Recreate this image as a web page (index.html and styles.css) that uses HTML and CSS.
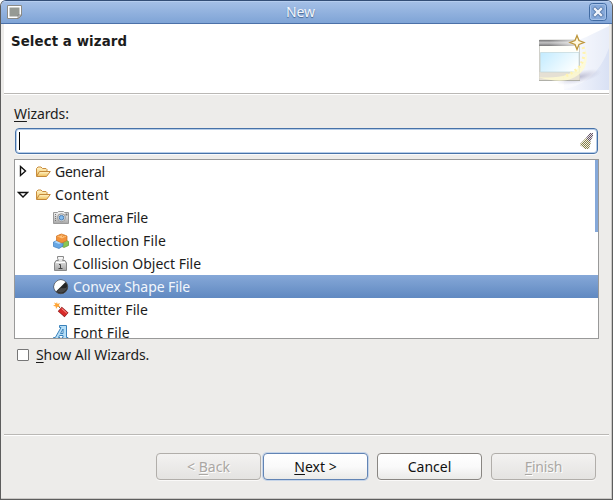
FILE: index.html
```html
<!DOCTYPE html>
<html lang="en">
<head>
<meta charset="utf-8">
<title>New</title>
<link rel="stylesheet" href="styles.css">
</head>
<body>
<svg width="0" height="0" class="defs">
  <defs>
    <linearGradient id="gold" x1="0" y1="0" x2="0" y2="1"><stop offset="0" stop-color="#fff6cd"/><stop offset="1" stop-color="#efbd55"/></linearGradient>
    <linearGradient id="metal" x1="0" y1="0" x2="0" y2="1"><stop offset="0" stop-color="#f8f8f8"/><stop offset="1" stop-color="#a8a8a8"/></linearGradient>
    <symbol id="folder" viewBox="0 0 16 16">
      <path d="M1.500 12V4.500L3 3h3l1.500 1.500H11l1 1V8" fill="url(#gold)" stroke="#c98d3d"/>
      <path d="M1.500 12.500L4.500 7.500H15.300L11.500 12.500Z" fill="url(#gold)" stroke="#c4883a"/>
    </symbol>
  </defs>
</svg>
<div class="window">
  <header class="titlebar">
    <svg class="app" width="16" height="16" viewBox="0 0 16 16"><path d="M.5 1.500h14v10l-3 3H.5z" fill="#fff" stroke="#8b8b87"/><path d="M2.500 3.500h10v7l-2 2h-8z" fill="#969a94"/><path d="M11 14.500v-3.500h3.500z" fill="#ccc" stroke="#777" stroke-width=".7"/></svg>
    <span class="title">New</span>
    <svg class="close" width="18" height="18" viewBox="0 0 18 18"><rect x=".5" y=".5" width="17" height="17" rx="3" fill="#86a9da" stroke="#416ba3"/><rect x="1.500" y="1.500" width="15" height="15" rx="2" fill="none" stroke="#a6c2e8"/><path d="M6 6l6 6M12 6l-6 6" stroke="#5578a8" stroke-width="4" stroke-linecap="square"/><path d="M6 6l6 6M12 6l-6 6" stroke="#f0f4fb" stroke-width="2.400" stroke-linecap="square"/></svg>
  </header>
  <section class="banner">
    <h1>Select a wizard</h1>
    <svg class="art" width="75" height="66" viewBox="0 0 75 66">
      <defs>
        <linearGradient id="bg"><stop offset="0" stop-color="#fafbff"/><stop offset="1" stop-color="#d9e1f4"/></linearGradient>
        <linearGradient id="bar" x1="0" y1="0" x2="0" y2="1"><stop offset="0" stop-color="#777"/><stop offset=".45" stop-color="#c2c2c2"/><stop offset="1" stop-color="#777"/></linearGradient>
        <linearGradient id="fade"><stop offset=".25" stop-color="#fff" stop-opacity="0"/><stop offset="1" stop-color="#fff" stop-opacity=".8"/></linearGradient>
        <linearGradient id="sky" x2="1" y2=".5"><stop offset="0" stop-color="#c2ebff"/><stop offset="1" stop-color="#fafeff"/></linearGradient>
        <radialGradient id="shade"><stop offset="0" stop-color="#9d9dba" stop-opacity=".65"/><stop offset="1" stop-color="#b3b3ce" stop-opacity="0"/></radialGradient>
      </defs>
      <path d="M28 23Q52 14 75 2v64H30z" fill="url(#bg)"/>
      <path d="M75 0Q52 11 28 17l-2 49Q62 61 75 24z" fill="#fff" opacity=".4"/>
      <ellipse cx="45" cy="53" rx="23" ry="6" fill="url(#shade)" transform="rotate(-14 45 53)"/>
      <path d="M5.500 16h40v40h-40z" fill="#fffffa" stroke="#bcbcb4" stroke-width=".7"/>
      <path d="M5.500 48h40v8h-40z" fill="#e5e0d4"/>
      <path d="M5 16h40v6H5z" fill="url(#bar)"/><path d="M5 16h41v6H5z" fill="url(#fade)"/>
      <path d="M6.500 28.500H45V48H6.500z" fill="url(#sky)" stroke="#b9d0d5" stroke-width=".6"/>
      <path d="M5 56.500h41" stroke="#b0b0a8"/>
      <path d="M48 19Q56 31 46 42Q34 56 4 53Q39 64 51 43Q56 29 48 19z" fill="#fffbd0" opacity=".8"/>
      <path d="M49 23Q52 32 46 42Q40 49 29 53" fill="none" stroke="#fff3b0" stroke-width="3" stroke-dasharray="2 3"/>
      <path d="M43 11.500l2 5 5 2-5 2-2 5-2-5-5-2 5-2z" fill="#fff9df" stroke="#bd963c" stroke-width="1.300"/>
    </svg>
  </section>
  <main>
    <label class="caption"><u>W</u>izards:</label>
    <div class="field"><i class="caret"></i>
      <svg width="16" height="18" viewBox="0 0 16 18"><defs><pattern id="dots" width="2" height="2" patternUnits="userSpaceOnUse"><path d="M0 0h1v1H0zM1 1h1v1H1z" fill="#858047"/></pattern><pattern id="grip" width="2" height="2" patternUnits="userSpaceOnUse"><path d="M0 0h1v1H0zM1 1h1v1H1z" fill="#665464"/></pattern></defs><path d="M7 6l5 4-2 7H6l-5-4v-1z" fill="#eae8d8" opacity=".6"/><path d="M7 6l5 4-2 7H6l-5-4v-1z" fill="url(#dots)"/><path d="M11 1h3v3l-3 6-4-4z" fill="#e3e1e4"/><path d="M11 1h3v3l-3 6-4-4z" fill="url(#grip)"/></svg>
    </div>
    <div class="tree">
      <div class="row parent"><svg class="arrow" width="12" height="14"><path d="M3.500 1.500v9L8.500 6z" fill="#fff" stroke="#111" stroke-width="1.400"/></svg><svg class="icon" width="16" height="16"><use href="#folder"/></svg><span class="t-general">General</span></div>
      <div class="row parent"><svg class="arrow" width="12" height="14"><path d="M1.500 4.500h9L6 9z" fill="#fff" stroke="#111" stroke-width="1.400"/></svg><svg class="icon" width="16" height="16"><use href="#folder"/></svg><span class="t-content">Content</span></div>
      <div class="row"><svg class="icon" width="16" height="16"><path d="M.5 2.500h4l1-1h5l1 1h4v11H.5z" fill="url(#metal)" stroke="#999"/><path d="M2.500 4v8" stroke="#777" stroke-dasharray="1 1"/><rect x="12.500" y="3.500" width="2" height="2" fill="#777"/><circle cx="8.500" cy="7.700" r="4" fill="#ddd" stroke="#999"/><circle cx="8.500" cy="7.700" r="2.300" fill="#82bbef" stroke="#4c7fb5"/></svg><span class="t-camera">Camera File</span></div>
      <div class="row"><svg class="icon" width="16" height="16"><path d="M8 9l5-2 2.500 1.500v4L11 14.500 8 13z" fill="#8ac653" stroke="#5c9836" stroke-width=".7"/><path d="M.5 9L5 7l5 2v4l-4 2.500-5.500-2z" fill="#67a7e4" stroke="#3c7bbd" stroke-width=".7"/><path d="M1 9l4-1.500L10 9l-4 2z" fill="#b1d9fb"/><path d="M3.500 3l5-2 5.500 2v4.500L9 10 3.500 7.500z" fill="#f2913a" stroke="#cc7020" stroke-width=".7"/><path d="M4 3.200L8.500 1.400l5 1.800L9 5.500z" fill="#ffc27a"/><path d="M6 3.300v-1l2-.6v1M9.500 3.800v-1l2-.5v1" stroke="#dc761c" stroke-width=".7" fill="#ffb96b"/></svg><span class="t-collection">Collection File</span></div>
      <div class="row"><svg class="icon" width="16" height="16"><path d="M4.500 .5h6v2L9.500 4.500h2.500L13.500 7v7.500h-12V7L3 4.500h2.500l-1-2z" fill="url(#metal)" stroke="#888"/><path d="M3 6.500h9M6 2h3" stroke="#fff"/><path d="M6 8.500h1.500V12.500M5.500 12.500h4" fill="none" stroke="#444"/></svg><span class="t-collision">Collision Object File</span></div>
      <div class="row selected"><svg class="icon" width="16" height="16"><circle cx="7.800" cy="7.800" r="6.900" fill="#252525" stroke="#484848"/><path d="M3 12.600A6.500 6.500 0 0 1 12.600 3z" fill="#fff"/><path d="M4 12.500A6.400 6.400 0 0 0 14 8Q12 10 8 9z" fill="#666" opacity=".55"/></svg><span class="t-convex">Convex Shape File</span></div>
      <div class="row"><svg class="icon" width="16" height="16"><path d="M4 3l3 3" stroke="#777"/><path d="M4 0l.5 2L7 1 5.800 3.300 7.500 5l-3-.2L3 7l-.3-2.500L0 3.700l2.300-1L1 .5l2.200 1z" fill="#ffa536"/><path d="M6.800 7l6.700 6" stroke="#941c1c" stroke-width="6"/><path d="M7.200 7.400l5.900 5.200" stroke="#d92b2a" stroke-width="4.600"/><path d="M8.700 6.500l5 4.500" stroke="#ff9f96"/></svg><span class="t-emitter">Emitter File</span></div>
      <div class="row"><svg class="icon" width="16" height="16"><path d="M.5 12.500h1.800L8 2.500H6.500v-2h7v12H15v3H9v-3h1V10.500H6.500L5.500 12.500H7v3H.5z" fill="#b5def7" stroke="#3b82bb"/><path d="M10 4v4.500H7.500z" fill="#fff" stroke="#3b82bb"/></svg><span class="t-font">Font File</span></div>
      <i class="thumb"></i>
    </div>
    <label class="check"><i class="box"></i><span class="t-show"><u>S</u>how All Wizards.</span></label>
  </main>
  <footer>
    <button class="disabled"><span class="t-back">&lt; <u>B</u>ack</span></button>
    <button class="default"><span class="t-next"><u>N</u>ext &gt;</span></button>
    <button class="cancel"><span class="t-cancel">Cancel</span></button>
    <button class="disabled finish"><span class="t-finish"><u>F</u>inish</span></button>
  </footer>
</div>
</body>
</html>
```
FILE: styles.css
```css
* { box-sizing: border-box; }
body { margin: 0; background: #fff; color: #1c1c1c; font: 14px/20px "Noto Sans", "Open Sans", sans-serif; }
.defs { position: absolute; }
.window { width: 613px; height: 500px; display: flex; flex-direction: column; background: #edecea; border: 1px solid #5d5d5d; border-top-color: #334e77; border-radius: 6px 6px 0 0; overflow: hidden; box-shadow: inset -1px -1px #c9c7c5; }
.titlebar { height: 23px; flex: none; display: flex; align-items: center; justify-content: space-between; padding: 0 5px 0 6px; background: linear-gradient(#a5c0e7, #7fa4d6); border-bottom: 1px solid #4c71a8; box-shadow: inset 0 1px #b5cdef; }
.title { margin-right: 11px; color: #f4f7fc; text-shadow: 0 1px 1px #45658f; letter-spacing: -.1px; }
.banner { height: 70px; flex: none; margin: 0 3px; display: flex; justify-content: space-between; background: #fff; border-bottom: 1px solid #bab8b5; box-shadow: 0 1px #fff; }
h1 { margin: 8px 0 0 7px; font: bold 13.33px/20px "DejaVu Sans", sans-serif; letter-spacing: .1px; }
.art { display: block; }
main { height: 341px; flex: none; margin: 0 3px; padding: 10px 10px 0; border-bottom: 1px solid #bab8b5; box-shadow: 0 1px #fff; display: flex; flex-direction: column; }
u { text-decoration: underline; text-underline-offset: 2px; text-decoration-thickness: 1px; }
.caption { height: 24px; line-height: 20px; letter-spacing: -.1px; }
.field { height: 26px; margin: 0 1px; display: flex; align-items: center; justify-content: space-between; padding: 0 2px 0 3px; background: #fff; border: 1px solid #4772a8; border-radius: 4px; box-shadow: inset 0 0 0 1px #b7cde8, 0 1px #fafafa; }
.caret { width: 1px; height: 18px; background: #000; }
.tree { position: relative; width: 585px; height: 180px; flex: none; margin-top: 5px; overflow: hidden; background: #fff; border: 1px solid #999; }
.row { height: 23px; display: flex; align-items: center; padding-left: 38px; }
.parent { padding-left: 2px; }
.arrow { flex: none; margin-right: 6px; }
.icon { flex: none; margin-right: 4px; }
.row span { white-space: nowrap; }
.t-general { letter-spacing: -.25px; }
.t-content { letter-spacing: .2px; }
.t-camera { letter-spacing: -.2px; }
.t-collection { letter-spacing: .13px; }
.t-convex, .t-show { letter-spacing: -.08px; }
.t-emitter { letter-spacing: .05px; }
.t-font { letter-spacing: .15px; }
.selected { color: #f2f6fc; background: linear-gradient(#86a8d8, #6089c1); }
.thumb { position: absolute; top: 0; right: 0; width: 3px; height: 72px; background: #85a8d9; }
.check { display: flex; align-items: center; height: 20px; margin-top: 6px; padding-left: 3px; }
.box { width: 12px; height: 12px; margin-right: 7px; background: #fff; border: 1px solid #777; border-radius: 1px; }
footer { display: flex; padding: 18px 0 0 155px; }
button { width: 105px; height: 27px; padding: 0; margin: 0 2px 0 0; font: inherit; color: #111; border: 1px solid #898682; border-radius: 4px; background: linear-gradient(#fff, #fafafa 50%, #eaeae8); box-shadow: 0 1px #faf9f8; }
.default { border-color: #6284b4; box-shadow: 0 0 0 1px #c6d5e9; }
.cancel { margin-left: 7px; }
.finish { margin-left: 7px; }
.disabled { color: #aaa7a3; border-color: #b1aeaa; background: linear-gradient(#f3f2f1, #e4e3e1); text-shadow: 1px 1px #fff; }
.t-finish { letter-spacing: -.2px; }
```
